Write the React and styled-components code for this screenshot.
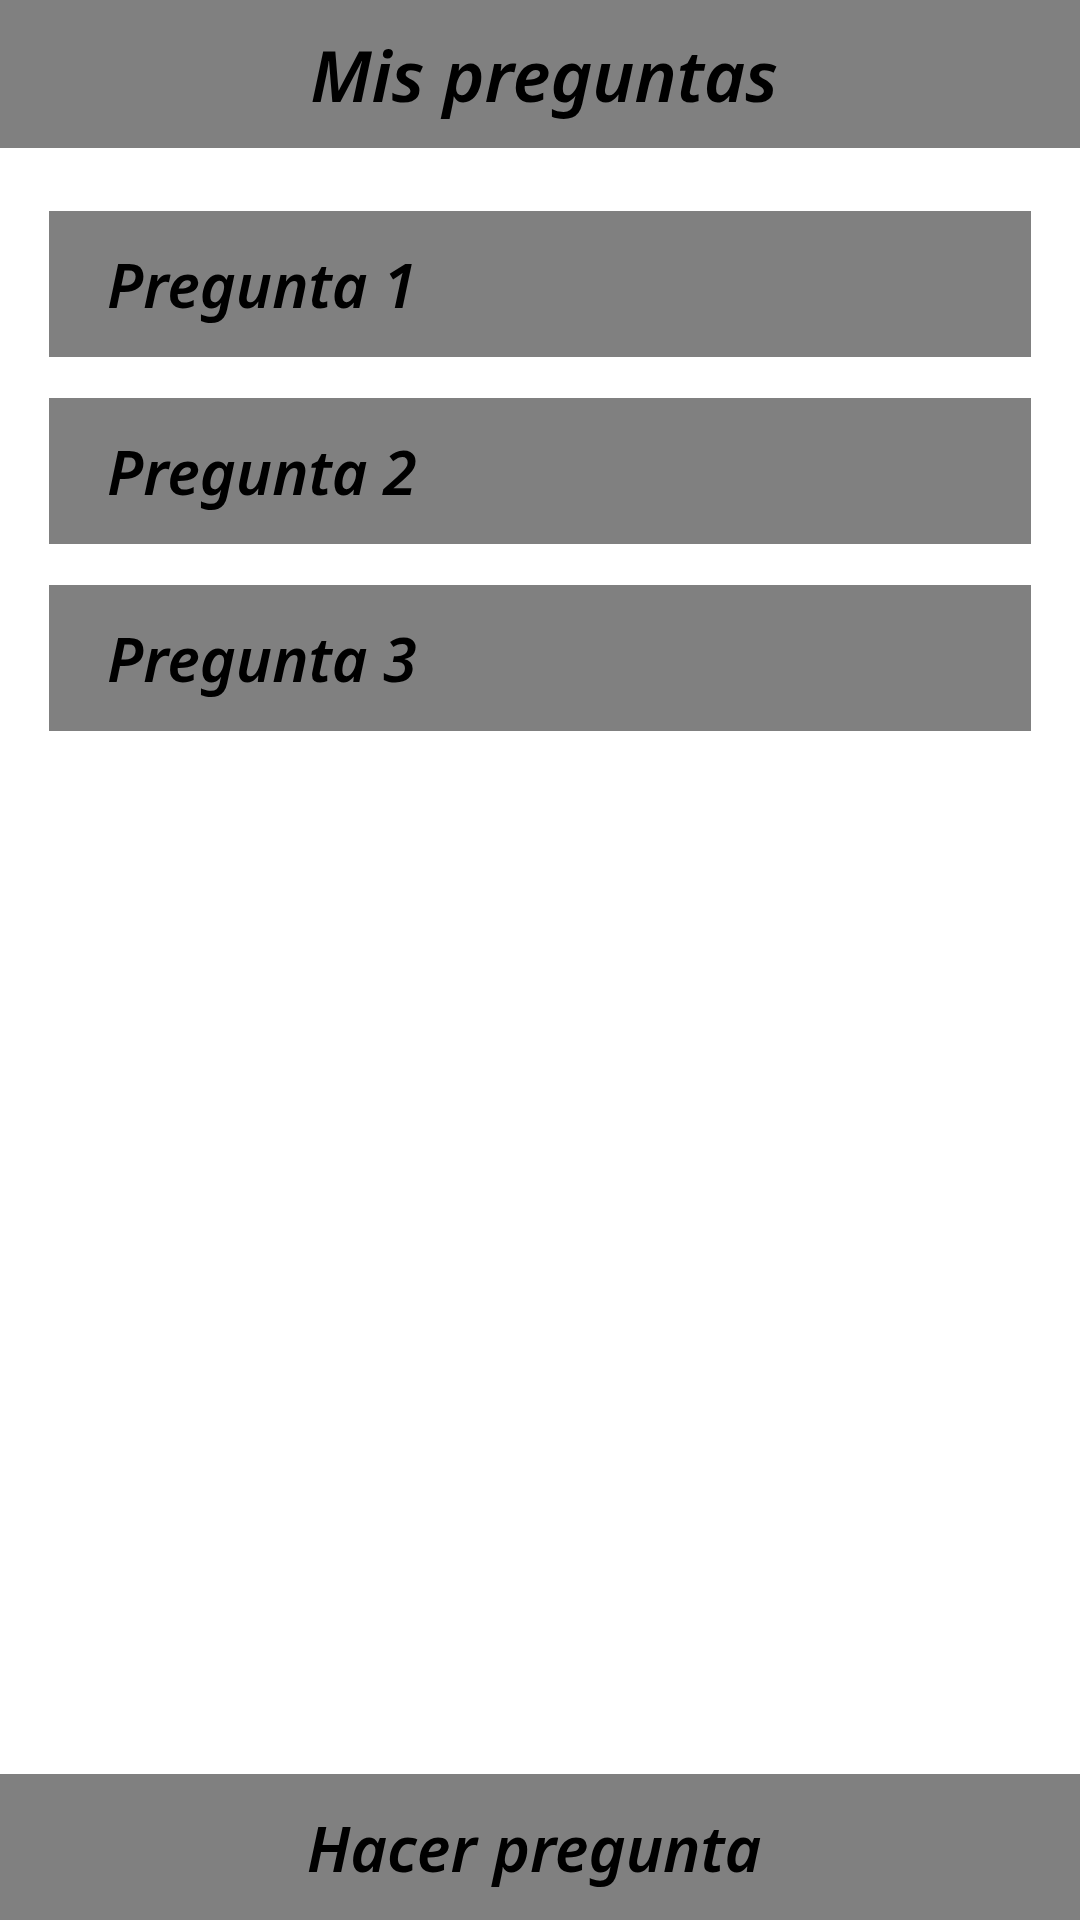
import React from "react";
import styled, { createGlobalStyle } from "styled-components";

const GlobalStyle = createGlobalStyle`
  html, body {
    margin: 0;
    padding: 0;
    background: #ffffff;
  }
  * { box-sizing: border-box; }
`;

const Screen = styled.div`
  width: 1080px;
  height: 1920px;
  display: flex;
  flex-direction: column;
  background: #ffffff;
  font-family: "Noto Sans", sans-serif;
  font-style: italic;
  color: #000000;
`;

const TopBar = styled.header`
  height: 148px;
  flex-shrink: 0;
  background: #808080;
  display: flex;
  align-items: center;
  justify-content: center;
`;

const Title = styled.h1`
  margin: 0 0 0 8px;
  font-size: 71px;
  font-weight: 600;
  line-height: 1;
`;

const QuestionList = styled.ul`
  list-style: none;
  margin: 0;
  padding: 63px 49px 0;
  display: flex;
  flex-direction: column;
  gap: 41px;
  flex: 1;
`;

const QuestionItem = styled.li`
  height: 146px;
  background: #808080;
  display: flex;
  align-items: center;
  padding-left: 58px;
  font-size: 61px;
  font-weight: 600;
  line-height: 1;
`;

const AskButton = styled.button`
  height: 146px;
  flex-shrink: 0;
  border: none;
  background: #808080;
  font-family: inherit;
  font-style: italic;
  font-size: 63px;
  font-weight: 600;
  color: #000000;
  display: flex;
  align-items: center;
  justify-content: center;
  padding: 0 12px 0 0;
`;

const preguntas = ["Pregunta 1", "Pregunta 2", "Pregunta 3"];

export default function App() {
  return (
    <>
      <GlobalStyle />
      <Screen>
        <TopBar>
          <Title>Mis preguntas</Title>
        </TopBar>
        <QuestionList>
          {preguntas.map((p) => (
            <QuestionItem key={p}>{p}</QuestionItem>
          ))}
        </QuestionList>
        <AskButton>Hacer pregunta</AskButton>
      </Screen>
    </>
  );
}
